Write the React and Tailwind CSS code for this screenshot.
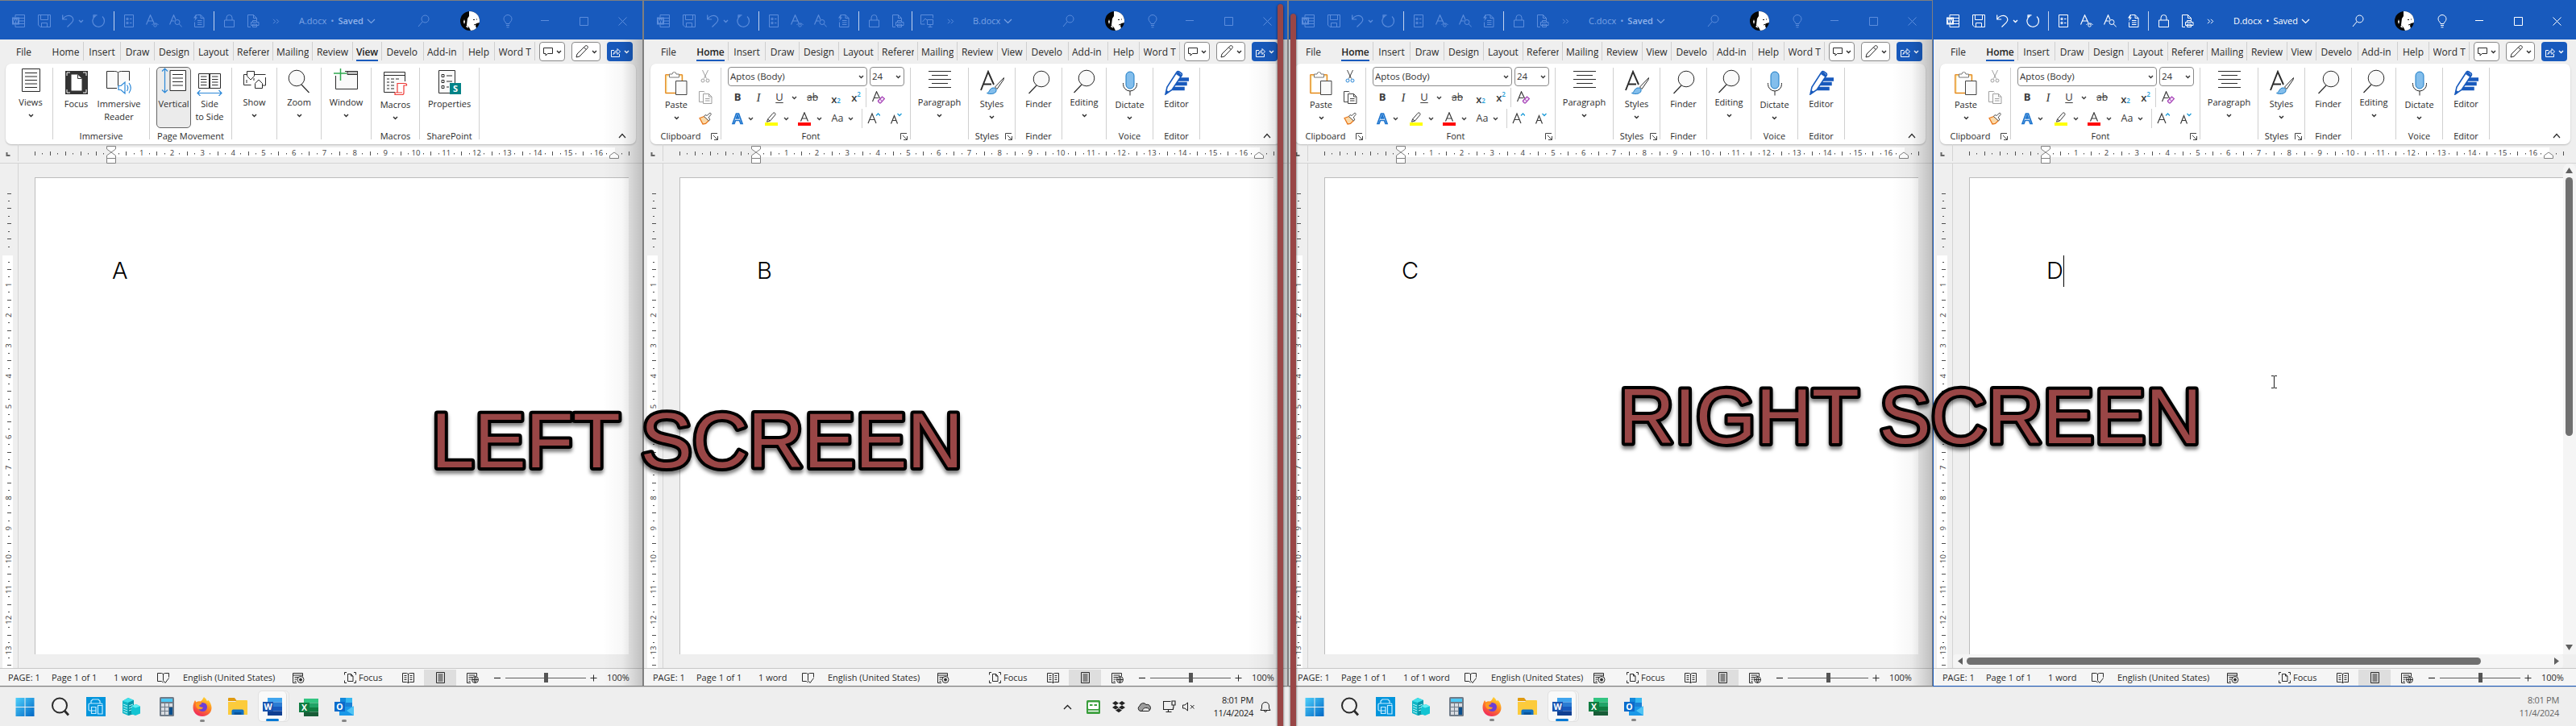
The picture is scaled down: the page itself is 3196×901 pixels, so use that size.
import React from "react";
import clsx from "clsx";

const CM = 37.8;

/* ---------- small shared pieces ---------- */

const Svg = ({ w = 16, h = 16, box, children, className }) => (
  <svg
    width={w}
    height={h}
    viewBox={box || `0 0 ${w} ${h}`}
    fill="none"
    stroke="currentColor"
    className={clsx("shrink-0", className)}
  >
    {children}
  </svg>
);

const Chevron = ({ className }) => (
  <Svg w={7} h={5} className={className}>
    <path d="M1 1l2.500 2.500L6 1" strokeWidth="1.400" />
  </Svg>
);

const Launcher = () => (
  <Svg w={9} h={9} className="text-[#444]">
    <path d="M.5 8V.5H8M3 3l5 5M8.500 4v4.500H4" />
  </Svg>
);

/* ---------- title bar ---------- */

const WordMark = () => (
  <Svg>
    <path d="M4 3.500V.5h11.500v15H4v-3M9 4.500h6.500M9 8h6.500M9 11.500h6.500" />
    <rect x="0" y="3.500" width="9" height="9" fill="currentColor" stroke="none" />
    <path d="M1.800 5.500l1.200 5 1.500-4.500 1.500 4.500 1.200-5" stroke="#185abd" />
  </Svg>
);
const SaveIcon = () => (
  <Svg>
    <path d="M.5.5h15v15H3l-2.500-2.500zM3.500.5v6h9v-6M4.500 15.500v-5h7v5" />
  </Svg>
);
const UndoIcon = () => (
  <Svg w={15}>
    <path d="M.7.5v5.500h5.500M1 5.500C3.500 2 8 .2 11.500 2.200c3 2 3 5.500.5 8L6.500 15.500" strokeWidth="1.200" />
  </Svg>
);
const RedoIcon = () => (
  <Svg w={17}>
    <path d="M2 5.500V.8H6.500M13 2.500a7.300 7.300 0 1 1-8.500-.8L2.500 3.500" strokeWidth="1.200" />
  </Svg>
);
const FormIcon = () => (
  <Svg w={12}>
    <path d="M.5.5h11v15H.5zM3 4.500h2v2H3zM3 9.500h2v2H3zM7 5.500h2.500M7 10.500h2.500" />
  </Svg>
);
const AEyeIcon = () => (
  <Svg>
    <path d="M.5 12.500L5.500.8 10 10.500M2.500 8h6.500" strokeWidth="1.200" />
    <path d="M7.500 13a4.500 4 0 0 1 8 0" />
    <circle cx="11.500" cy="13.500" r="1.700" />
  </Svg>
);
const ASearchIcon = () => (
  <Svg>
    <path d="M.5 12.500L5.500.8 8 6.500M2.500 8h4" strokeWidth="1.200" />
    <circle cx="10" cy="9.500" r="3" />
    <path d="M12.200 11.700l3.500 3.800" />
  </Svg>
);
const FlashDocIcon = () => (
  <Svg w={15}>
    <path d="M5.500.5h4.500l4 4v11H2.500v-6M10 .5v4h4M6 7.500h5.500M6 10h5.500M6 12.500h5.500" />
    <path d="M4 0L1 4.500h2.500L2 8.500l4-5H3.800L5.500 0z" fill="currentColor" stroke="none" />
  </Svg>
);
const LockIcon = () => (
  <Svg w={13}>
    <path d="M.5 7h12v8.500H.5zM3 7V4a3.500 3.500 0 0 1 7 0v3" />
  </Svg>
);
const PrintDocIcon = () => (
  <Svg w={15}>
    <path d="M4 15.500H.5V.5h7l4 4V7M7.500.5v4h4M6.500 9.500V7.500h5v2M4.500 9.500h9.500v4H4.500zM6.500 12h5v3.500h-5z" />
  </Svg>
);
const PictureScreenIcon = () => (
  <Svg>
    <path d="M.5 12V.5h15v4M.5 12h5M2.500 9l3.500-4 2 2M8.500 6.500h7v6h-7zM12 12.500v3M9.500 15.500h5" />
  </Svg>
);
const MoreIcon = () => (
  <Svg w={9} h={7}>
    <path d="M1 .8l2.700 2.700L1 6.200M5 .8l2.700 2.700L5 6.200" />
  </Svg>
);

const Avatar = () => (
  <svg width="24" height="24" viewBox="0 0 24 24" className="shrink-0">
    <defs>
      <clipPath id="face">
        <circle cx="12" cy="12" r="12" />
      </clipPath>
    </defs>
    <g clipPath="url(#face)">
      <path d="M0 0h24v24H0z" fill="#050505" />
      <path d="M11 0h13v14l-4 1-1 3 2 6h-8l-2-4-3-3 1-8 2-3z" fill="#fff" />
      <path d="M4 13l1-3 1 3-1 3zM7 19l2-2 1 4z" fill="#fff" />
      <path d="M16 10.500h2M20 10h1M17 17l3-1" stroke="#111" />
    </g>
  </svg>
);

const TitleSep = () => <div className="h-6 w-px shrink-0 bg-[#c3d3ee]" />;

const Cell = ({ w, children, className }) => (
  <div style={{ width: w }} className={clsx("flex shrink-0 items-center justify-center", className)}>
    {children}
  </div>
);

const TitleBar = ({ name, saved, active, extra }) => (
  <div
    className={clsx(
      "flex h-12 shrink-0 items-center bg-[#185abd] pt-0.5 text-[11px]",
      active ? "text-white" : "text-[#5c8ddc]"
    )}
  >
    <Cell w={48}><WordMark /></Cell>
    <Cell w={16}><SaveIcon /></Cell>
    <Cell w={42}><UndoIcon /></Cell>
    <Cell w={6} className="-ml-2"><Chevron /></Cell>
    <Cell w={38}><RedoIcon /></Cell>
    <TitleSep />
    <Cell w={36}><FormIcon /></Cell>
    <Cell w={22}><AEyeIcon /></Cell>
    <Cell w={36}><ASearchIcon /></Cell>
    <Cell w={20}><FlashDocIcon /></Cell>
    <Cell w={9} />
    <TitleSep />
    <Cell w={37}><LockIcon /></Cell>
    <Cell w={23}><PrintDocIcon /></Cell>
    {extra ? (
      <>
        <Cell w={5} />
        <TitleSep />
        <Cell w={36}><PictureScreenIcon /></Cell>
        <Cell w={22}><MoreIcon /></Cell>
        <Cell w={17} />
      </>
    ) : (
      <>
        <Cell w={29} className="pl-1"><MoreIcon /></Cell>
        <Cell w={16} />
      </>
    )}
    <div
      className={clsx(
        "flex shrink-0 items-center whitespace-nowrap",
        extra ? "w-[105px]" : "w-[141px]",
        !active && "text-[#7ba3e4]"
      )}
    >
      <span>{name}</span>
      {saved && (
        <>
          <span className="px-[5px]">•</span>
          <span className={active ? "" : "font-semibold text-[#93b4ea]"}>Saved</span>
        </>
      )}
      <Svg w={11} h={7} className="ml-1">
        <path d="M1 1l4.500 4.500L10 1" strokeWidth="1.200" />
      </Svg>
    </div>
    <Cell w={28}>
      <Svg>
        <circle cx="9.500" cy="5.500" r="4.500" />
        <path d="M6.200 8.800L1 15" />
      </Svg>
    </Cell>
    <Cell w={86}><Avatar /></Cell>
    <Cell w={7}>
      <Svg w={12} h={17}>
        <path d="M4 11.500C4 9.500 1 8.500 1 5.500a5 5 0 0 1 10 0c0 3-3 4-3 6zM4 13.500h4M4.500 15.800h3" />
      </Svg>
    </Cell>
    <Cell w={86}>
      <Svg w={10} h={4}><path d="M0 1.500h10" /></Svg>
    </Cell>
    <Cell w={10}>
      <Svg w={11} h={11}><path d="M.5.5h10v10H.5z" /></Svg>
    </Cell>
    <Cell w={10} className="ml-[38px]">
      <Svg w={11} h={11}><path d="M.5.5l10 10M10.500.5l-10 10" /></Svg>
    </Cell>
  </div>
);

/* ---------- tab strip ---------- */

// long names are cut by the narrow window, so they carry only what fits
const tabs = [
  { name: "Insert", w: 46 },
  { name: "Draw", w: 42 },
  { name: "Design", w: 49 },
  { name: "Layout", w: 49 },
  { name: "Referen", w: 49, clip: true },
  { name: "Mailing", w: 49, clip: true },
  { name: "Review", w: 50 },
  { name: "View", w: 36 },
  { name: "Develo", w: 52, clip: true },
  { name: "Add-in", w: 49, clip: true },
  { name: "Help", w: 39 },
  { name: "Word T", w: 50, clip: true },
];

const Tab = ({ name, w, clip, active, plain }) => (
  <div
    style={{ width: w }}
    className={clsx("flex h-[23px] shrink-0 items-center justify-center", !plain && "border-r border-[#cfcfcf]")}
  >
    <span
      className={clsx(
        "whitespace-nowrap border-b-2 pt-[3px] leading-[19px]",
        clip && "w-10 overflow-hidden",
        active ? "border-[#185abd] font-semibold text-[#222] tracking-[-0.1px]" : "border-transparent"
      )}
    >
      {name}
    </span>
  </div>
);

const TabStrip = ({ active }) => (
  <div className="flex h-[30px] shrink-0 items-start pt-[3px] text-[12px] text-[#2b2b2b]">
    <Tab name="File" w={61} plain />
    <Tab name="Home" w={44} active={active === "Home"} />
    {tabs.map((t) => (
      <Tab key={t.name} {...t} active={active === t.name} />
    ))}
    <div className="ml-[5px] flex gap-2">
      <div className="flex h-6 w-8 items-center justify-center gap-1 rounded-[4px] border border-[#8a8a8a] bg-white">
        <Svg w={12} h={12}><path d="M.5 1.500h11v7H5.500L3 11V8.500H.5z" /></Svg>
        <Chevron />
      </div>
      <div className="flex h-6 w-9 items-center justify-center gap-1 rounded-[4px] border border-[#8a8a8a] bg-white">
        <Svg>
          <path d="M1 15l1-4L12 1.200a1.800 1.800 0 0 1 2.800 2.600L5 14zM10.500 2.800l2.800 2.800" />
        </Svg>
        <Chevron />
      </div>
      <div className="flex h-6 w-8 items-center justify-center gap-1 rounded-[4px] bg-[#185abd] text-white">
        <Svg w={12} h={13}>
          <path d="M4 4.500H.5v8h10V9M3 9.500c.5-3 2-4.500 5-4.500V2.500l3.500 3.500L8 9.500V7C6 7 4.500 7.500 3 9.500z" />
        </Svg>
        <Chevron />
      </div>
    </div>
  </div>
);

/* ---------- ribbon ---------- */

const Group = ({ w, label, launcher, children }) => (
  <div style={{ width: w }} className="flex h-[100px] shrink-0">
    <div className="flex flex-1 flex-col">
      <div className="flex h-[82px] justify-center">{children}</div>
      <div className="flex h-4 items-center justify-center leading-4">
        <span className="flex-1 whitespace-nowrap text-center">{label}</span>
        {launcher && <span className="pr-[3px]"><Launcher /></span>}
      </div>
    </div>
    <div className="mt-[5px] h-[89px] w-px bg-[#d0d0d0]" />
  </div>
);

const Big = ({ w = 50, icon, label, chevron, high, className }) => (
  <div style={{ width: w }} className={clsx("flex shrink-0 flex-col items-center", className)}>
    <div className={clsx("flex shrink-0 items-center pt-1", high ? "h-10" : "h-[42px]")}>{icon}</div>
    <div className="whitespace-pre text-center leading-4">{label}</div>
    {chevron && <Chevron className="mt-[6px]" />}
  </div>
);

const Magnifier = ({ flip }) => (
  <Svg w={30} h={30} className={flip && "-scale-x-100"}>
    <circle cx="12" cy="11" r="9.800" fill="#fafafa" />
    <path d="M18 19l9.500 10" strokeWidth="1.200" />
  </Svg>
);

const PasteIcon = () => (
  <Svg w={28} h={30}>
    <path d="M1.500 5.500h20v22h-20z" fill="#fff" stroke="#f7d98b" strokeWidth="2" />
    <path d="M14 27.500H.7V4.700h20.600V12" stroke="#e07a14" />
    <path d="M5.500 8V4h3.500a2.500 2.500 0 0 1 5 0h3.500v4z" fill="#fff" stroke="#777" />
    <path d="M13.500 12.500h13.500v17H13.500z" fill="#fafafa" stroke="#444" />
  </Svg>
);
const CutIcon = ({ on }) => (
  <Svg className={on ? "text-[#444]" : "text-[#a0a0a0]"}>
    <path d="M4.500 0l5 10.500M11.500 0l-5 10.500" />
    <g stroke={on ? "#2b88d8" : "#a0a0a0"}>
      <circle cx="5" cy="13" r="2" />
      <circle cx="11" cy="13" r="2" />
    </g>
  </Svg>
);
const CopyIcon = ({ on }) => (
  <Svg w={17} className={on ? "text-[#444]" : "text-[#a0a0a0]"}>
    <path d="M5 13.500H.5V.5h6l1 1" />
    <path d="M5.500 3.500h7l3.500 3.500v8.500H5.500zM12.500 3.500V7H16M8 9.500h5.500M8 12h5.500" fill="#fafafa" />
  </Svg>
);
const PainterIcon = () => (
  <Svg>
    <path d="M1 7.500l4 7.500 3.500-.5 4-4L7 5.500z" fill="#fbd9a8" stroke="#e8761a" strokeWidth="1.300" />
    <path d="M6.500 5.500l6 5.500 1.500-2-2-2 3.500-4.500-1.500-1.500L10 4.500 8 3.500z" fill="#fff" stroke="#555" />
  </Svg>
);
const ParagraphIcon = () => (
  <Svg w={28} h={22} className="mb-1">
    <path d="M0 .5h28M4 5.500h20M0 10.500h28M4 15.500h20M0 20.500h28" />
  </Svg>
);
const StylesIcon = () => (
  <Svg w={30} h={30}>
    <path d="M1 25L10 2l7 16M4 17.500h10" strokeWidth="1.900" />
    <path d="M29.500 9.500L18.500 21l2.500 2.500L29 12z" fill="#fff" />
    <path d="M8.500 28.500c3 0 3-6.500 8-6.500 3 0 4.500 2.500 3 5-2 3-8 3-11 1.500z" fill="#83beec" stroke="#1b7bc4" />
  </Svg>
);
const MicIcon = () => (
  <Svg w={20} h={31}>
    <rect x="5" y="1" width="10" height="21" rx="5" fill="#83beec" stroke="#1b7bc4" />
    <path d="M1.500 15v1.500a8.500 8.500 0 0 0 17 0V15M10 25v5.500" />
  </Svg>
);
const EditorIcon = () => (
  <Svg w={30} h={31}>
    <path d="M15 10h15v3H15zM13 15.500h14v3H13zM10 21.500h14v3H10z" fill="#185abd" stroke="#185abd" strokeWidth="1.500" />
    <path d="M1 30l2-9L15 2.500a2 2 0 0 1 3-.5l2.500 1.800a2 2 0 0 1 .5 3L9 24.500z" fill="#fff" stroke="#185abd" strokeWidth="1.600" />
    <path d="M1 30l1.500-5 3 2zM14 5l6 4 1.500-2.500-5-5z" fill="#185abd" stroke="none" />
  </Svg>
);

const FontRow = ({ children }) => <div className="mt-0.5 flex h-6 items-center text-[#3a3a3a]">{children}</div>;

const FontGroup = () => (
  <Group w={235} label="Font" launcher>
    <div className="ml-2 flex w-[226px] flex-col pt-1">
      <div className="flex gap-[3px] text-[11.500px] text-[#333]">
        <div className="flex h-6 w-[173px] items-center justify-between rounded-[4px] border border-[#8a8a8a] pl-[2px] pr-[3px]">
          <span>Aptos (Body)</span>
          <Chevron />
        </div>
        <div className="flex h-6 w-[43px] items-center justify-between rounded-[4px] border border-[#8a8a8a] pl-[2px] pr-[3px]">
          <span>24</span>
          <Chevron />
        </div>
      </div>
      <FontRow>
        <Cell w={24} className="text-[13px] font-bold">B</Cell>
        <Cell w={28} className="font-['Liberation_Serif'] text-[15px] italic">I</Cell>
        <Cell w={24} className="text-[13px] underline underline-offset-2">U</Cell>
        <Cell w={13}><Chevron /></Cell>
        <Cell w={32} className="text-[12px] line-through">ab</Cell>
        <Cell w={26} className="pt-1 text-[13px] font-semibold leading-none">
          x<sub className="text-[8px] text-[#1b9bd8]">2</sub>
        </Cell>
        <Cell w={24} className="text-[13px] font-semibold leading-none">
          x<sup className="text-[8px] text-[#1b9bd8]">2</sup>
        </Cell>
        <div className="h-6 w-px bg-[#d0d0d0]" />
        <Cell w={29}>
          <Svg>
            <path d="M.5 13L5.500.8 9.500 9M2.500 8.500h5.500" strokeWidth="1.200" />
            <path d="M7.500 12l5-5 3 2.500-5 5.500H9.500L7.500 13z" fill="#f3e3f7" stroke="#a33bb5" strokeWidth="1.200" />
            <path d="M9.500 10l3.500 3" stroke="#a33bb5" />
          </Svg>
        </Cell>
      </FontRow>
      <FontRow>
        <Cell w={24}>
          <Svg>
            <path d="M2 14.500L6.500 2h3L14 14.500h-2l-1.500-4h-5L4 14.500zM6.500 8h3L8 4z" fill="#fff" stroke="#1c74ce" strokeWidth="1.700" />
          </Svg>
        </Cell>
        <Cell w={9}><Chevron /></Cell>
        <Cell w={20} className="ml-[11px]">
          <Svg h={17}>
            <path d="M3.500 9L10 1.500a1.600 1.600 0 0 1 2.600 2.300L6.500 11zM3.500 9l-1 3.200L6.500 11" />
            <path d="M0 13h16v4H0z" fill="#ffff00" stroke="none" />
          </Svg>
        </Cell>
        <Cell w={17}><Chevron /></Cell>
        <Cell w={28}>
          <Svg h={17}>
            <path d="M3.500 11.500L8 .8l4.500 10.700M5 8h6" strokeWidth="1.200" />
            <path d="M0 13h16v4H0z" fill="#f00" stroke="none" />
          </Svg>
        </Cell>
        <Cell w={9}><Chevron /></Cell>
        <Cell w={26} className="ml-[5px] text-[12.500px]">Aa</Cell>
        <Cell w={7}><Chevron /></Cell>
        <div className="ml-[10px] h-6 w-px bg-[#d0d0d0]" />
        <Cell w={28}>
          <Svg>
            <path d="M1 14L6 2l5 12M3 9.500h6" strokeWidth="1.200" />
            <path d="M11 4.500L13.500 2 16 4.500" stroke="#1b9bd8" strokeWidth="1.300" />
          </Svg>
        </Cell>
        <Cell w={26}>
          <Svg>
            <path d="M2.500 14.500l4-10 4 10M4 10.500h5" strokeWidth="1.200" />
            <path d="M10.500 2L13 4.500 15.500 2" stroke="#1b9bd8" strokeWidth="1.300" />
          </Svg>
        </Cell>
      </FontRow>
    </div>
  </Group>
);

const HomeRibbon = ({ canCut }) => (
  <>
    <Group w={88} label="Clipboard" launcher>
      <Big w={56} icon={<PasteIcon />} label="Paste" chevron className="ml-[3px] pt-px" />
      <div className="flex w-[26px] flex-col items-start gap-[10px] pt-2">
        <CutIcon on={canCut} />
        <CopyIcon on={canCut} />
        <PainterIcon />
      </div>
    </Group>
    <FontGroup />
    <Group w={72}>
      <Big w={66} icon={<ParagraphIcon />} label="Paragraph" chevron high />
    </Group>
    <Group w={58} label="Styles" launcher>
      <Big icon={<StylesIcon />} label="Styles" chevron />
    </Group>
    <Group w={58} label="Finder">
      <Big icon={<Magnifier flip />} label="Finder" />
    </Group>
    <Group w={55}>
      <Big icon={<Magnifier flip />} label="Editing" chevron high />
    </Group>
    <Group w={58} label="Voice">
      <Big icon={<MicIcon />} label="Dictate" chevron className="pt-px" />
    </Group>
    <Group w={58} label="Editor">
      <Big icon={<EditorIcon />} label="Editor" />
    </Group>
  </>
);

const ViewRibbon = () => (
  <>
    <Group w={59}>
      <Big
        high
        chevron
        className="ml-1"
        label="Views"
        icon={
          <Svg w={23} h={29} className="mb-1">
            <path d="M.5.5h22v28H.5z" fill="#fafafa" />
            <path d="M4 5.500h15M4 10h15M4 14.500h15M4 19h15M4 23.500h15" />
          </Svg>
        }
      />
    </Group>
    <Group w={120} label="Immersive">
      <Big
        w={48}
        label="Focus"
        icon={
          <Svg w={28} h={29}>
            <path d="M0 0h28v29H0z" fill="#333" stroke="none" />
            <path d="M2 6V2h4M22 2h4v4M26 23v4h-4M6 27H2v-4" stroke="#fff" />
            <path d="M7.500 4.500h8l5 5v15h-13z" fill="#fff" stroke="none" />
            <path d="M15.500 4.500v5h5" stroke="#333" />
          </Svg>
        }
      />
      <Big
        w={58}
        className="mr-1"
        label={"Immersive\nReader"}
        icon={
          <Svg w={32} h={30}>
            <path d="M13 22.500H.5v-21h10c3 0 4 1 4 3 0-2 1-3 4-3h10V13M14.500 4.500v15" fill="#fafafa" />
            <path d="M15 19.500h3l5-4.500v14l-5-4.500h-3zM25.500 18.500q2.500 3.500 0 7.500M28 16q4.500 6 0 12.500" stroke="#2b88d8" strokeWidth="1.200" />
          </Svg>
        }
      />
    </Group>
    <Group w={102} label="Page Movement">
      <div className="ml-1 mt-1 flex h-[76px] w-[43px] shrink-0 justify-center rounded-[5px] border border-[#666] bg-[#ebebeb]">
        <Big
          w={41}
          className="-mt-[5px]"
          label="Vertical"
          icon={
            <Svg w={31} h={32} className="mb-1">
              <path d="M4.500 1v30M1 4.500L4.500 1 8 4.500M1 27.500L4.500 31 8 27.500" stroke="#2b88d8" strokeWidth="1.200" />
              <path d="M11 3.500h19.500v25H11z" fill="#fff" />
              <path d="M14 8.500h13M14 13h13M14 17.500h13M14 22h13" />
            </Svg>
          }
        />
      </div>
      <Big
        w={46}
        label={"Side\nto Side"}
        icon={
          <Svg w={32} h={30} className="mt-1">
            <path d="M2.500 2.500h13.500v18H2.500zM16 2.500h13.500v18H16z" fill="#fff" />
            <path d="M16 2v19" strokeWidth="2" />
            <path d="M5 6h7.500M5 9.500h7.500M5 13h7.500M5 16.500h7.500M19 6h7.500M19 9.500h7.500M19 13h7.500M19 16.500h7.500" />
            <path d="M1 26.500h30M4.500 23L1 26.500 4.500 30M27.500 23l3.500 3.500-3.500 3.500" stroke="#2b88d8" strokeWidth="1.200" />
          </Svg>
        }
      />
    </Group>
    <Group w={56}>
      <Big
        high
        chevron
        label="Show"
        icon={
          <Svg w={30} h={24} className="mb-1">
            <path d="M5.500 1.500h9v6L10 12 5.500 7.500zM14.500 5.500h14M5.500 5.500h-4v13h9M15.500 22.500v-6l4.500-4.500 4.500 4.500v6z" fill="#fff" />
            <path d="M28.500 9v10h-4M5 12v4M14 10v3" />
          </Svg>
        }
      />
    </Group>
    <Group w={55}>
      <Big high chevron label="Zoom" icon={<Magnifier />} />
    </Group>
    <Group w={62}>
      <Big
        high
        chevron
        label="Window"
        icon={
          <Svg w={31} h={28} className="mb-1">
            <path d="M2.500 9v16.500h27v-22H14" fill="#fafafa" />
            <path d="M17 3.500h12.500v4H17z" fill="#bbb" />
            <path d="M8.500-2v17M0 6h16" stroke="#2fa84f" strokeWidth="1.500" />
          </Svg>
        }
      />
    </Group>
    <Group w={60} label="Macros">
      <Big
        w={56}
        chevron
        className="pt-px"
        label="Macros"
        icon={
          <Svg w={31} h={30}>
            <path d="M15 26.500H1.500V1.500h26V13M1.500 5.500h26" fill="#fafafa" />
            <path d="M5 10h3M10 10h4M16 10h4M5 14h3M10 14h4M5 18h3M10 18h4M5 22h3M10 22h4" />
            <path d="M18 27V15.500h9.500a2 2 0 0 1 2 2.500h-3.500v9.500a2 2 0 0 1-2 2h-9v-2.500h9" fill="#fff" stroke="#ee3a36" strokeWidth="1.200" />
          </Svg>
        }
      />
    </Group>
    <Group w={74} label="SharePoint">
      <Big
        w={70}
        label="Properties"
        icon={
          <Svg w={28} h={30}>
            <path d="M.5.500h20v28H.5z" fill="#fafafa" />
            <path d="M4 5.500h3v3H4zM4 12.500h3v3H4zM4 19.500h3v3H4zM10 7h7M10 14h7M10 21h3" />
            <rect x="14" y="16" width="14" height="14" fill="#038387" stroke="none" />
            <text x="21" y="27" fontSize="11" fontWeight="bold" textAnchor="middle" fill="#fff" stroke="none">S</text>
          </Svg>
        }
      />
    </Group>
  </>
);

const Ribbon = ({ children }) => (
  <div className="ml-2 flex h-[100px] w-[782px] shrink-0 rounded-[7px] bg-white text-[11px] text-[#2b2b2b] shadow-[0_1px_2px_rgba(0,0,0,0.22)]">
    {children}
    <div className="flex flex-1 items-end justify-end pb-[7px] pr-3">
      <Svg w={10} h={7}><path d="M1 6l4-4.500L9 6" strokeWidth="1.200" /></Svg>
    </div>
  </div>
);

/* ---------- rulers ---------- */

const ticks = (from, to) => {
  const out = [];
  for (let q = from * 4; q <= to * 4; q++) out.push(q / 4);
  return out;
};

const HorizontalRuler = () => (
  <svg width="798" height="24" viewBox="1 179 798 24" className="shrink-0">
    <path d="M140 183h625v12H140z" fill="#fff" />
    <path d="M24.500 179v21" stroke="#d4d4d4" />
    <path d="M0 202.500h800" stroke="#d4d4d4" />
    <path d="M10.500 189v4h4" stroke="#666" strokeWidth="2" fill="none" />
    {ticks(-2.5, 17).map((v) => {
      const x = 139.900 + v * CM;
      if (v === 0 || v === 16.500) return null;
      if (v > 0 && v < 17 && Number.isInteger(v))
        return (
          <text key={v} x={x} y="193.200" fontSize="9.500" textAnchor="middle" fill="#404040">
            {v}
          </text>
        );
      const dot = (v * 4) % 2 !== 0;
      return (
        <rect key={v} x={Math.round(x - 0.5)} y={dot ? 190 : 188} width="1" height={dot ? 1.500 : 5} fill="#505050" />
      );
    })}
    <g fill="#fff" stroke="#808080">
      <path d="M134.500 181.500h11v3.500l-5.500 4-5.500-4z" />
      <path d="M134.500 196.500v-3.500l5.500-4 5.500 4v3.500zM134.500 196.500h11v6h-11z" />
      <path d="M758.500 196.500v-3.500l5.500-4 5.500 4v3.500z" />
    </g>
  </svg>
);

const VerticalRuler = () => (
  <svg width="24" height="626" viewBox="1 203 24 626" className="shrink-0">
    <path d="M5 317h13v512H5z" fill="#fff" />
    <path d="M24.500 203v626" stroke="#d4d4d4" />
    {ticks(-2, 13.500).map((v) => {
      const y = 315.600 + v * CM;
      if (v === 0) return null;
      if (v > 0 && Number.isInteger(v))
        return (
          <text key={v} transform={`translate(16 ${y}) rotate(-90)`} fontSize="9.500" textAnchor="middle" fill="#404040">
            {v}
          </text>
        );
      const dot = (v * 4) % 2 !== 0;
      return <rect key={v} x={dot ? 12 : 11} y={Math.round(y - 0.5)} width={dot ? 2 : 5} height="1" fill="#505050" />;
    })}
  </svg>
);

/* ---------- document ---------- */

const Document = ({ letter, active }) => (
  <div className="flex h-[626px] shrink-0">
    <VerticalRuler />
    <div className="flex w-[757px] flex-col">
      <div className="ml-5 mt-[17px] h-[592px] w-[737px] border-l border-t border-[#bdbdbd] bg-white">
        <div className="flex items-center pl-[95px] pt-[95px] font-['Inter'] text-[29px] font-light leading-[40px] text-black">
          <span>{letter}</span>
          {active && <div className="h-[39px] w-px bg-black" />}
        </div>
      </div>
      {active && (
        <div className="flex h-[17px] items-center rounded bg-[#f5f5f5] pl-[5px] pr-[4px]">
          <Svg w={7} h={9}><path d="M7 0v9L1 4.500z" fill="#606060" stroke="none" /></Svg>
          <div className="ml-[5px] h-[9px] w-[638px] rounded-full bg-[#707070]" />
          <div className="flex-1" />
          <Svg w={7} h={9}><path d="M0 0v9l6-4.500z" fill="#606060" stroke="none" /></Svg>
        </div>
      )}
    </div>
    {active && (
      <div className="flex h-[609px] w-4 flex-col items-center rounded-t-lg bg-[#f5f5f5] pr-px pt-[5px]">
        <Svg w={9} h={7}><path d="M0 7h9L4.500 0z" fill="#606060" stroke="none" /></Svg>
        <div className="mt-[5px] h-[321px] w-[9px] rounded-full bg-[#707070]" />
        <div className="flex-1" />
        <Svg w={9} h={7} className="mb-[5px]"><path d="M0 0h9L4.500 7z" fill="#606060" stroke="none" /></Svg>
      </div>
    )}
  </div>
);

/* ---------- status bar ---------- */

const StatusBar = ({ words }) => {
  const wide = words.length > 8;
  return (
    <div className="flex h-[22px] shrink-0 items-center border-t border-[#c8c8c8] bg-[#f5f5f5] pt-px text-[11px] text-[#2b2b2b]">
      <span className="w-[65px] pl-[11px]">PAGE: 1</span>
      <span className="w-[77px]">Page 1 of 1</span>
      <span className={wide ? "w-[76px]" : "w-[54px]"}>{words}</span>
      <Svg w={15} h={13}>
        <path d="M7.500 12L5.500 10.500H.5V.5h5l2 1 2-1h5v5M7.500 1.500v8M7.500 9.500l2.500 3 4.500-6" />
      </Svg>
      <span className={clsx("whitespace-nowrap", wide ? "w-[136px] pl-[18px]" : "w-[153px] pl-[17px]")}>
        English (United States)
      </span>
      <Svg w={15} h={13} className={wide ? "ml-[9px]" : "ml-0"}>
        <path d="M5 12.500H.5V.5h12v4M.5 3h12M2.500 5.500H7M2.500 8h3M2.500 10.500h2" />
        <circle cx="10" cy="8.500" r="4" />
        <circle cx="10" cy="8.500" r="1.500" fill="currentColor" />
      </Svg>
      <div className={clsx("flex items-center gap-[3px]", wide ? "ml-[26px]" : "ml-[49px]")}>
        <Svg w={15} h={14}>
          <path d="M.5 3.500v-3H3M12 .5h2.500v3M14.500 10.500v3H12M3 13.500H.5v-3M4.500 2.500h4l2.500 2.500v6.500H4.500zM8.500 2.500V5H11" />
        </Svg>
        <span className="w-[54px]">Focus</span>
      </div>
      <Svg w={15} h={13}>
        <path d="M.5.5h5l2 1 2-1h5v11h-5l-2 1-2-1h-5zM7.500 1.500v11M2.500 3.500h3M2.500 6h3M2.500 8.500h3M9.500 3.500h3M9.500 6h3M9.500 8.500h3" />
      </Svg>
      <div className="-my-px ml-3 flex h-5 w-10 items-center justify-center bg-[#dedede]">
        <Svg w={11} h={14}>
          <path d="M.5.5h10v13H.5zM2.500 3h6M2.500 5h6M2.500 7h6M2.500 9h6M2.500 11h6" />
        </Svg>
      </div>
      <Svg w={15} h={13} className="ml-[13px]">
        <path d="M5 12.500H.5V.5h12v4M2.500 3h8M2.500 5.500H7M2.500 8h3M2.500 10.500h2" />
        <circle cx="10.500" cy="8.500" r="4" />
        <path d="M6.500 8.500h8M10.500 4.500q-3 4 0 8M10.500 4.500q3 4 0 8" />
      </Svg>
      <Svg w={9} h={9} className="ml-[18px]"><path d="M1 4.500h8" strokeWidth="1.200" /></Svg>
      <div className="ml-[6px] flex w-[100px] items-center">
        <div className="h-px flex-1 bg-[#606060]" />
        <div className="h-3 w-[5px] bg-[#555]" />
        <div className="h-px flex-1 bg-[#606060]" />
      </div>
      <Svg w={9} h={9} className="ml-[5px]"><path d="M.5 4.500h8M4.500.5v8" /></Svg>
      <span className="ml-3">100%</span>
    </div>
  );
};

/* ---------- word window ---------- */

const WordWindow = ({ letter, tab = "Home", saved, active, extra, canCut, words = "1 word" }) => (
  <div
    className={clsx(
      "relative flex h-[852px] w-[800px] shrink-0 flex-col overflow-hidden border bg-[#efefef]",
      active ? "border-[#185abd]" : "border-[#7f7f7f]"
    )}
  >
    <TitleBar name={`${letter}.docx`} saved={saved} active={active} extra={extra} />
    <TabStrip active={tab} />
    <Ribbon>{tab === "View" ? <ViewRibbon /> : <HomeRibbon canCut={canCut} />}</Ribbon>
    <HorizontalRuler />
    <Document letter={letter} active={active} />
    <StatusBar words={words} />
    {!active && (
      <div className="absolute bottom-0 right-0 top-12 w-[50px] bg-linear-to-r from-transparent via-black/3 to-black/20" />
    )}
  </div>
);

/* ---------- taskbar ---------- */

const OfficeTile = ({ letter, colors, badge }) => (
  <Svg w={24} h={24} className="mt-px">
    <g stroke="none">
      <path d="M6 1h18v5.500H6z" fill={colors[0]} />
      <path d="M6 6.500h18V12H6z" fill={colors[1]} />
      <path d="M6 12h18v5.500H6z" fill={colors[2]} />
      <path d="M6 17.500h18V23H6z" fill={colors[3]} />
      <path d="M0 6h13v12H0z" fill={badge} />
      <text x="6.500" y="15.800" fontSize="10.500" fontWeight="bold" textAnchor="middle" fill="#fff">
        {letter}
      </text>
    </g>
  </Svg>
);

const TaskIcon = ({ children, dot }) => (
  <div className="flex h-[49px] w-11 shrink-0 flex-col items-center pt-3">
    <div className="flex h-6 items-center">{children}</div>
    {dot && <div className="mt-[3.500px] h-[3px] w-[6px] rounded-full bg-[#868686]" />}
  </div>
);

const Apps = () => (
  <div className="flex pl-[9px]">
    <TaskIcon>
      <Svg w={24} h={24}>
        <defs>
          <linearGradient id="win" x1="0" y1="0" x2="1" y2="1">
            <stop offset="0" stopColor="#4fd0fb" />
            <stop offset="1" stopColor="#0067c5" />
          </linearGradient>
        </defs>
        <path d="M.5 1H11.500v11H.5zM12.500 1h11v11h-11zM.5 13h11v11H.5zM12.500 13h11v11h-11z" fill="url(#win)" stroke="none" />
      </Svg>
    </TaskIcon>
    <TaskIcon>
      <Svg w={24} h={24} className="text-[#2a2a2a]">
        <circle cx="11" cy="10.500" r="9" strokeWidth="2" fill="#f2f2f2" />
        <path d="M17 17l5 5.500" strokeWidth="2.800" />
      </Svg>
    </TaskIcon>
    <TaskIcon>
      <Svg w={24} h={24} className="text-[#c9ecff]">
        <path d="M0 0h24v24H0z" fill="#0295dc" stroke="none" />
        <path d="M6 8V5l2-2h7l2 2v3M12 17H4.500q-1.500 0-1.500-1.500v-6Q3 8 4.500 8h14q1.500 0 1.500 1.500M6.500 20.500v-8H12v8zM14.500 10.500H20v10.500h-5.500z" strokeWidth="1.200" />
      </Svg>
    </TaskIcon>
    <TaskIcon>
      <Svg w={24} h={24}>
        <g stroke="none">
          <path d="M1 5l7-4 7 3v17l-7 2-7-3z" fill="#0fb5c5" />
          <path d="M1 5l7-4 7 3-7 3z" fill="#3fe0ea" />
          <path d="M8 7l7-3v17l-7 2z" fill="#0796a8" />
          <path d="M12 11l6-2 5 2.500v9L17 23l-5-2z" fill="#13c4d2" />
          <path d="M12 11l6-2 5 2.500-6 2z" fill="#62eef3" />
        </g>
        <path d="M2 9l5 2M2 12l5 2M2 15l5 2M2 18l5 2M9 11l5-2M9 14l4-1.500M9 17l3-1" stroke="#b8f5f8" />
      </Svg>
    </TaskIcon>
    <TaskIcon>
      <Svg w={18} h={24}>
        <g stroke="none">
          <rect width="18" height="24" rx="1.500" fill="#6f7b88" />
          <path d="M2 2h14v4H2z" fill="#4cc8f5" />
          <path d="M2 8h4v4H2zM7 8h4v4H7zM12 8h4v4h-4zM2 13h4v4H2zM7 13h4v4H7zM2 18h4v4H2zM7 18h4v4H7z" fill="#d7dbe0" />
          <path d="M12 13h4v9h-4z" fill="#0b4f8d" />
        </g>
      </Svg>
    </TaskIcon>
    <TaskIcon dot>
      <Svg w={24} h={24}>
        <defs>
          <linearGradient id="fox" x1="0.800" y1="0" x2="0.300" y2="1">
            <stop offset="0" stopColor="#ffe536" />
            <stop offset="0.450" stopColor="#ff8a1f" />
            <stop offset="1" stopColor="#f0245e" />
          </linearGradient>
        </defs>
        <g stroke="none">
          <path d="M14 0c2 1.500 3 3 3.500 4.500 1 .5 2-.5 2-.5 2.500 2.500 4 6 4 9.500C23.500 19.500 18.500 24 12 24S.5 19.500.5 13C.5 9 1.500 7 3 4c.5 1 .8 1.800 1.500 2.500C6 5.500 8 5 9.500 5.500 12 4.500 12.500 2 14 0z" fill="url(#fox)" />
          <circle cx="12.500" cy="12.500" r="5.500" fill="#6b3fd6" />
          <path d="M4 8c3-2 6-1 7.500.5-1.500 1-3 1-3.500 2.500 1 2 3.500 1.500 5 2-1 2.500-4.500 3-7 1.500C4.500 13 3.500 10.500 4 8z" fill="#ff9b20" />
        </g>
      </Svg>
    </TaskIcon>
    <TaskIcon>
      <Svg w={24} h={24}>
        <g stroke="none">
          <path d="M0 2q0-1 1-1h7l3 4H0z" fill="#e09a10" />
          <path d="M0 6h9l2-2h12q1 0 1 1v17H0z" fill="#fccb3c" />
          <path d="M4.500 22v-4.500q0-2 2-2h11q2 0 2 2V22z" fill="#1272c4" />
          <path d="M7.500 22v-3h9v3z" fill="#0a559b" />
        </g>
      </Svg>
    </TaskIcon>
    <div className="flex h-[49px] w-11 shrink-0 items-start pl-[3px] pt-1">
      <div className="h-[39px] w-[39px] rounded-[5px] border border-[#e2e2e2] bg-[#f2f2f2]">
        <div className="flex h-[37px] w-[35px] flex-col items-center rounded-[5px] border-r border-[#dcdcdc] bg-[#f9f9f9] pt-[6px]">
          <OfficeTile letter="W" colors={["#41a5ee", "#2b7cd3", "#185abd", "#103f91"]} badge="#1b55b0" />
          <div className="mt-[3px] h-[3px] w-4 shrink-0 rounded-full bg-[#0078d4]" />
        </div>
      </div>
    </div>
    <TaskIcon>
      <OfficeTile letter="X" colors={["#33c481", "#21a366", "#107c41", "#185c37"]} badge="#107c41" />
    </TaskIcon>
    <TaskIcon dot>
      <Svg w={24} h={24}>
        <g stroke="none">
          <path d="M7 1h15v14H7z" fill="#1389dc" />
          <path d="M14 1h8v6h-8z" fill="#35b8f1" />
          <path d="M14 7h8v6h-8z" fill="#1a7fd4" />
          <path d="M6 12h18v11H6z" fill="#1a98e8" />
          <path d="M15 17l9-6v12z" fill="#50c4f4" />
          <path d="M0 6h13v12H0z" fill="#0a6bcb" />
          <text x="6.500" y="15.800" fontSize="10.500" fontWeight="bold" textAnchor="middle" fill="#fff">O</text>
        </g>
      </Svg>
    </TaskIcon>
  </div>
);

const Clock = ({ muted }) => (
  <div className={clsx("text-right text-[11px] leading-4 tracking-[-0.3px]", muted ? "text-[#666]" : "text-[#222]")}>
    <div>8:01 PM</div>
    <div>11/4/2024</div>
  </div>
);

const Tray = () => (
  <div className="flex items-center pr-[23px] text-[#222]">
    <Cell w={20}>
      <Svg w={11} h={7}><path d="M1 6l4.500-4.500L10 6" strokeWidth="1.400" /></Svg>
    </Cell>
    <Cell w={44}>
      <Svg w={17} h={17}>
        <rect width="17" height="17" rx="1.500" fill="#3a9e3c" stroke="none" />
        <rect x="2" y="2.500" width="13" height="8.500" rx="1" fill="#fff" stroke="none" />
        <path d="M4 6h3.500M9.500 6h3.500" stroke="#3a9e3c" strokeWidth="2" />
        <path d="M2 13.500h13" stroke="#fff" strokeWidth="1.500" />
      </Svg>
    </Cell>
    <Cell w={20}>
      <Svg w={16} h={15}>
        <path d="M4 0l4 2.700-4 2.600L0 2.700zM12 0l4 2.700-4 2.600-4-2.600zM4 5.300L8 8l-4 2.600L0 8zM12 5.300L16 8l-4 2.600L8 8zM4 11.500l4-2.600 4 2.600-4 2.700z" fill="#222" stroke="none" />
      </Svg>
    </Cell>
    <Cell w={43}>
      <Svg w={17} h={12}>
        <path d="M4 11.500a3.500 3.500 0 0 1-1-6.500A4.500 4.500 0 0 1 11 3.500 4 4 0 0 1 13.500 11.500z" fill="#9c9c9c" />
        <path d="M6 11.500c1-3.500 3-4 5-4s4 1 4 2.500-1 1.500-1.500 1.500z" fill="#e8e8e8" />
      </Svg>
    </Cell>
    <Cell w={20}>
      <Svg w={16} h={16}>
        <path d="M9.500 1.500h-9v10h12V9M6.500 11.500v3M3.500 14.500h7M11 1h4v5h-4zM13 6v3.500" strokeWidth="1.100" />
      </Svg>
    </Cell>
    <Cell w={28}>
      <Svg w={16} h={12}>
        <path d="M.5 4v4H3l3.500 3V1L3 4zM10 4l4.500 4.500M14.500 4L10 8.500" />
      </Svg>
    </Cell>
    <div className="w-[66px]"><Clock /></div>
    <Svg w={14} h={15} className="ml-2">
      <path d="M1 11.500l1.500-2.500V6a4.500 4.500 0 0 1 9 0v3l1.500 2.500zM5.500 12q1.500 3.500 3 0" />
    </Svg>
  </div>
);

/* ---------- annotations over the desktop ---------- */

const Banner = ({ text, className }) => (
  <svg
    width="760"
    height="110"
    className={clsx("absolute overflow-visible drop-shadow-[0_4px_2px_rgba(0,0,0,0.5)]", className)}
  >
    <text
      x="10"
      y="89"
      fontSize="96"
      fill="#994646"
      stroke="#000"
      strokeWidth="8"
      strokeLinejoin="round"
      className="font-['Liberation_Sans'] [paint-order:stroke]"
    >
      {text}
    </text>
  </svg>
);

export default function App() {
  return (
    <div className="relative h-[901px] w-[3196px] overflow-hidden bg-[#eeeeee] font-['Open_Sans','Noto_Sans',sans-serif]">
      <div className="-ml-0.5 flex w-[3200px]">
        <WordWindow letter="A" tab="View" saved />
        <WordWindow letter="B" extra />
        <WordWindow letter="C" saved canCut words="1 of 1 word" />
        <WordWindow letter="D" saved active />
      </div>
      <div className="flex h-[49px] border-t border-[#d2d2d2]">
        <div className="flex w-[1600px] justify-between">
          <Apps />
          <Tray />
        </div>
        <div className="flex flex-1 items-center justify-between pr-[21px]">
          <Apps />
          <Clock muted />
        </div>
      </div>

      <div className="absolute left-[1585px] top-[5px] h-[900px] w-[7px] rounded-t-full bg-[#994646] shadow-[0_1px_3px_rgba(0,0,0,0.7)]" />
      <div className="absolute left-[1601px] top-[17px] h-[900px] w-[7px] rounded-t-full bg-[#994646] shadow-[0_1px_3px_rgba(0,0,0,0.7)]" />
      <Banner text="LEFT SCREEN" className="left-[525px] top-[491px]" />
      <Banner text="RIGHT SCREEN" className="left-[1998px] top-[461px]" />
      <svg width="9" height="16" className="absolute left-[2817px] top-[466px]" stroke="#222" fill="none">
        <path d="M1 .5h3l.5 1 .5-1h3M4.500 1v14M1 15.500h3l.5-1 .5 1h3" />
      </svg>
    </div>
  );
}
